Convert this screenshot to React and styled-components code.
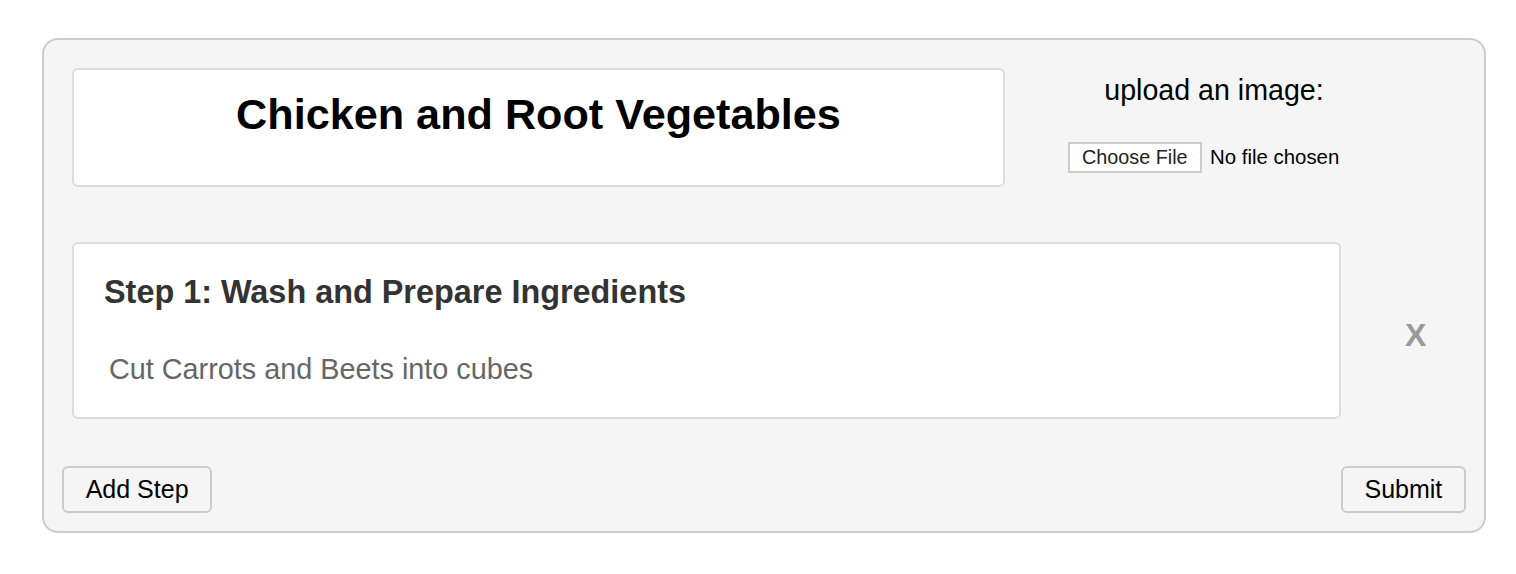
import React from "react";
import styled, { createGlobalStyle } from "styled-components";

const GlobalStyle = createGlobalStyle`
  * { box-sizing: border-box; }
  html, body { margin: 0; padding: 0; background: #ffffff; }
  body { font-family: "Liberation Sans", Arial, Helvetica, sans-serif; }
`;

const Page = styled.div`
  padding: 38px 0 0 42px;
`;

const Card = styled.div`
  width: 1444px;
  background: #f5f5f5;
  border: 2px solid #cccccc;
  border-radius: 16px;
  padding: 28px 18px 18px 18px;
  display: flex;
  flex-direction: column;
`;

const HeaderRow = styled.div`
  display: flex;
  align-items: flex-start;
  padding: 0 10px;
`;

const TitleBox = styled.div`
  width: 933px;
  height: 119px;
  background: #ffffff;
  border: 2px solid #dddddd;
  border-radius: 6px;
  padding-top: 20px;
  text-align: center;
`;

const Title = styled.h1`
  margin: 0;
  font-size: 43.2px;
  line-height: 48px;
  font-weight: 700;
  color: #000000;
`;

const UploadColumn = styled.div`
  width: 418px;
  display: flex;
  flex-direction: column;
  align-items: center;
  padding-top: 6px;
`;

const UploadLabel = styled.div`
  font-size: 28.6px;
  line-height: 32px;
  color: #000000;
`;

const FileField = styled.div`
  width: 292px;
  margin-top: 36px;
  display: flex;
  align-items: center;
`;

const FileButton = styled.button`
  height: 31px;
  padding: 0 12px;
  background: #ffffff;
  border: 2px solid #cccccc;
  border-radius: 0;
  font-family: "Liberation Sans", Arial, sans-serif;
  font-size: 19.8px;
  color: #222222;
  line-height: 1;
  cursor: pointer;
`;

const FileStatus = styled.span`
  margin-left: 8.5px;
  font-size: 20.4px;
  color: #000000;
  white-space: nowrap;
`;

const StepRow = styled.div`
  display: flex;
  align-items: center;
  gap: 64px;
  margin-top: 55px;
  padding: 0 10px;
`;

const StepCard = styled.div`
  width: 1269px;
  height: 177px;
  background: #ffffff;
  border: 2px solid #dddddd;
  border-radius: 6px;
  padding: 30px 30px 0 30px;
`;

const StepTitle = styled.h2`
  margin: 0;
  font-size: 32.4px;
  line-height: 36px;
  font-weight: 700;
  color: #333333;
`;

const StepText = styled.p`
  margin: 43px 0 0 5px;
  font-size: 28.8px;
  line-height: 32px;
  color: #666666;
`;

const RemoveButton = styled.span`
  margin-top: 9px;
  font-size: 32px;
  line-height: 36px;
  font-weight: 700;
  color: #999999;
  cursor: pointer;
`;

const ButtonRow = styled.div`
  display: flex;
  justify-content: space-between;
  margin-top: 47px;
`;

const ActionButton = styled.button`
  height: 47px;
  padding: 0 21.7px;
  background: #f5f5f5;
  border: 2px solid #cccccc;
  border-radius: 6px;
  font-family: "Liberation Sans", Arial, sans-serif;
  font-size: 25px;
  color: #000000;
  cursor: pointer;
`;

export default function App() {
  return (
    <>
      <GlobalStyle />
      <Page>
        <Card>
          <HeaderRow>
            <TitleBox>
              <Title>Chicken and Root Vegetables</Title>
            </TitleBox>
            <UploadColumn>
              <UploadLabel>upload an image:</UploadLabel>
              <FileField>
                <FileButton type="button">Choose File</FileButton>
                <FileStatus>No file chosen</FileStatus>
              </FileField>
            </UploadColumn>
          </HeaderRow>
          <StepRow>
            <StepCard>
              <StepTitle>Step 1: Wash and Prepare Ingredients</StepTitle>
              <StepText>Cut Carrots and Beets into cubes</StepText>
            </StepCard>
            <RemoveButton>X</RemoveButton>
          </StepRow>
          <ButtonRow>
            <ActionButton type="button">Add Step</ActionButton>
            <ActionButton type="button">Submit</ActionButton>
          </ButtonRow>
        </Card>
      </Page>
    </>
  );
}
